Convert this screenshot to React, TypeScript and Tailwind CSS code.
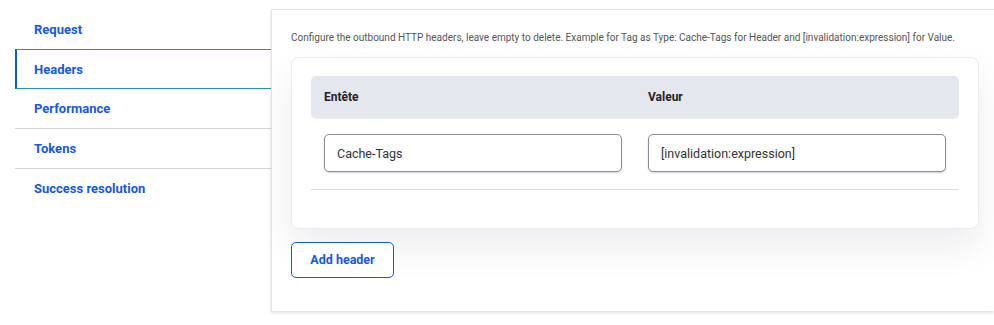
const navItems = [
  { label: "Request" },
  { label: "Headers", active: true },
  { label: "Performance" },
  { label: "Tokens" },
  { label: "Success resolution" },
];

function NavItem({ label, active, divider }: { label: string; active?: boolean; divider?: boolean }) {
  if (active) {
    return (
      <div className="h-[40px] flex items-center pl-[17px] pt-[1px] border-l-2 border-l-[#0b57e3] border-y border-y-[#1c98a6] bg-white">
        <span className="text-[13px] font-bold text-[#1558e0]">{label}</span>
      </div>
    );
  }
  return (
    <div
      className={`flex items-center pl-[19px] pt-[1px] ${
        divider ? "h-[40px] border-t border-t-[#d6d6dc]" : "h-[39px]"
      }`}
    >
      <span className="text-[13px] font-bold text-[#1558e0]">{label}</span>
    </div>
  );
}

function TextInput({ value }: { value: string }) {
  return (
    <input
      readOnly
      value={value}
      className="w-full h-[38px] rounded-[5px] border border-[#8b8e9a] bg-white px-[12px] text-[12.5px] text-[#333] shadow-[0_1px_2px_rgba(0,0,0,0.18)] outline-none"
    />
  );
}

export default function App() {
  return (
    <div
      className="w-[994px] h-[325px] bg-white flex pt-[9px] overflow-hidden"
      style={{ fontFamily: "Roboto, 'Liberation Sans', sans-serif" }}
    >
      <nav className="w-[257px] ml-[15px] mt-[1px] flex flex-col shrink-0">
        {navItems.map((it, i) => (
          <NavItem key={it.label} label={it.label} active={it.active} divider={i > 2} />
        ))}
      </nav>
      <section className="flex-1 -ml-[1px] h-[302px] border-l border-t border-[#e3e3e8] bg-white shadow-[0_2px_3px_rgba(0,0,0,0.12)] pl-[19px] pt-[21px] pr-[15px]">
        <p className="text-[10px] leading-[14px] text-[#555]">
          Configure the outbound HTTP headers, leave empty to delete. Example for Tag as Type: Cache-Tags for Header and [invalidation:expression] for Value.
        </p>
        <div className="mt-[12px] w-[688px] rounded-[8px] border border-[#ececf0] bg-white px-[19px] pt-[18px] pb-[38px] shadow-[0_18px_36px_rgba(30,30,60,0.08)]">
          <div className="grid grid-cols-[324px_1fr] h-[42px] items-center rounded-[5px] bg-[#e5e7ef] shadow-[0_1px_1px_rgba(0,0,0,0.08)]">
            <div className="pl-[13px] text-[12px] font-bold text-[#222]">Entête</div>
            <div className="pl-[13px] text-[12px] font-bold text-[#222]">Valeur</div>
          </div>
          <div className="grid grid-cols-[324px_1fr] pt-[16px] pb-[17px] border-b border-b-[#dcdce0]">
            <div className="px-[13px]">
              <TextInput value="Cache-Tags" />
            </div>
            <div className="px-[13px]">
              <TextInput value="[invalidation:expression]" />
            </div>
          </div>
        </div>
        <button className="mt-[13px] w-[103px] h-[36px] rounded-[5px] border border-[#1558e0] bg-white text-[12.5px] font-bold text-[#1558e0]">
          Add header
        </button>
      </section>
    </div>
  );
}
